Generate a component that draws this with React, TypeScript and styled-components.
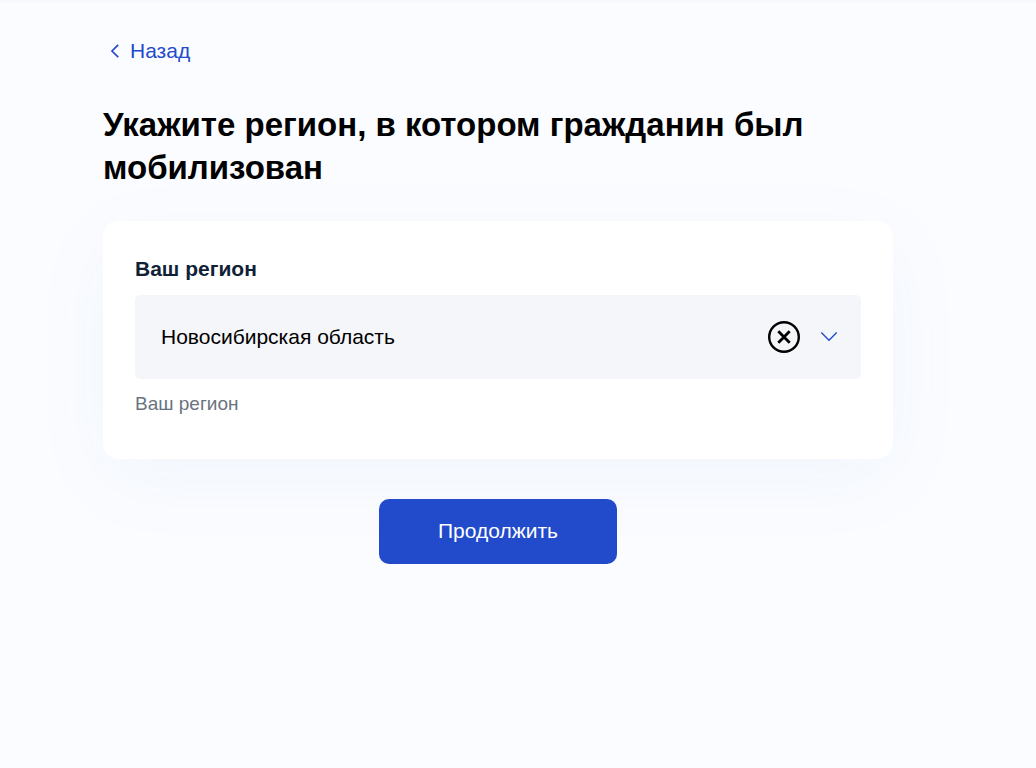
import React, { useState } from 'react';
import styled, { createGlobalStyle } from 'styled-components';

const GlobalStyle = createGlobalStyle`
  *, *::before, *::after { box-sizing: border-box; }
  body {
    margin: 0;
    background: #fbfcff;
    color: #000;
    font-family: "Liberation Sans", Arial, Helvetica, sans-serif;
    font-size: 21px;
    line-height: 28px;
  }
  button, select { font: inherit; }
`;

const Page = styled.div`
  min-height: 100vh;
  border-top: 3px solid #f8f9fc;
  padding: 34px 40px 40px 103px;

  @media (max-width: 800px) {
    padding-left: 40px;
  }
`;

const Content = styled.main`
  max-width: 790px;
`;

const BackLink = styled.a`
  display: inline-flex;
  align-items: center;
  gap: 10px;
  padding-left: 7px;
  color: #224bcb;
  text-decoration: none;
`;

const Title = styled.h1`
  margin: 37px 0 32px;
  font-size: 33px;
  line-height: 43px;
  font-weight: 700;
`;

const Form = styled.form`
  display: flex;
  flex-direction: column;
  align-items: center;
  gap: 40px;
`;

const Card = styled.div`
  width: 100%;
  padding: 34px 32px 41px;
  border-radius: 16px;
  background: #fff;
  box-shadow: 0 20px 80px rgba(34, 110, 203, 0.05);
`;

const Label = styled.label`
  display: block;
  margin-bottom: 12px;
  color: #111f37;
  font-weight: 700;
`;

const Field = styled.div`
  display: flex;
  align-items: center;
  height: 84px;
  padding: 0 23px 0 26px;
  border-radius: 5px;
  background: #f5f6fa;
  color: #224bcb;
`;

const RegionSelect = styled.select`
  flex: 1;
  min-width: 0;
  height: 100%;
  padding: 0;
  border: 0;
  outline: 0;
  appearance: none;
  background: transparent;
  color: #000;
`;

const ClearButton = styled.button`
  display: flex;
  margin-right: 20px;
  padding: 0;
  border: 0;
  border-radius: 50%;
  background: none;
  color: #000;
  cursor: pointer;
`;

const Hint = styled.p`
  margin: 11px 0 0;
  color: #69737f;
  font-size: 19px;
`;

const SubmitButton = styled.button`
  min-width: 238px;
  height: 65px;
  padding: 0 32px 2px;
  border: 0;
  border-radius: 10px;
  background: #224bcb;
  color: #fff;
  cursor: pointer;
`;

const BackIcon = () => (
  <svg width="10" height="16" viewBox="0 0 10 16" fill="none" stroke="currentColor" strokeWidth="1.7" aria-hidden="true">
    <path d="M8.2 1.8 2 8l6.2 6.2" />
  </svg>
);

const ClearIcon = () => (
  <svg width="32" height="32" viewBox="0 0 32 32" fill="none" stroke="currentColor" aria-hidden="true">
    <circle cx="16" cy="16" r="14.8" strokeWidth="2.4" />
    <path d="m10.3 10.3 11.4 11.4M21.7 10.3 10.3 21.7" strokeWidth="2.8" />
  </svg>
);

const ChevronIcon = () => (
  <svg width="18" height="12" viewBox="0 0 18 12" fill="none" stroke="currentColor" strokeWidth="1.4" aria-hidden="true">
    <path d="m1.3 1.5 7.7 7.7 7.7-7.7" />
  </svg>
);

export default function App() {
  const [region, setRegion] = useState('nsk');

  return (
    <>
      <GlobalStyle />
      <Page>
        <Content>
          <BackLink href="#back">
            <BackIcon />
            Назад
          </BackLink>
          <Title>Укажите регион, в котором гражданин был мобилизован</Title>
          <Form onSubmit={(event) => event.preventDefault()}>
            <Card>
              <Label htmlFor="region">Ваш регион</Label>
              <Field>
                <RegionSelect
                  id="region"
                  aria-describedby="region-hint"
                  value={region}
                  onChange={(event) => setRegion(event.target.value)}
                >
                  <option value="" />
                  <option value="nsk">Новосибирская область</option>
                </RegionSelect>
                <ClearButton type="button" aria-label="Очистить" onClick={() => setRegion('')}>
                  <ClearIcon />
                </ClearButton>
                <ChevronIcon />
              </Field>
              <Hint id="region-hint">Ваш регион</Hint>
            </Card>
            <SubmitButton type="submit">Продолжить</SubmitButton>
          </Form>
        </Content>
      </Page>
    </>
  );
}
